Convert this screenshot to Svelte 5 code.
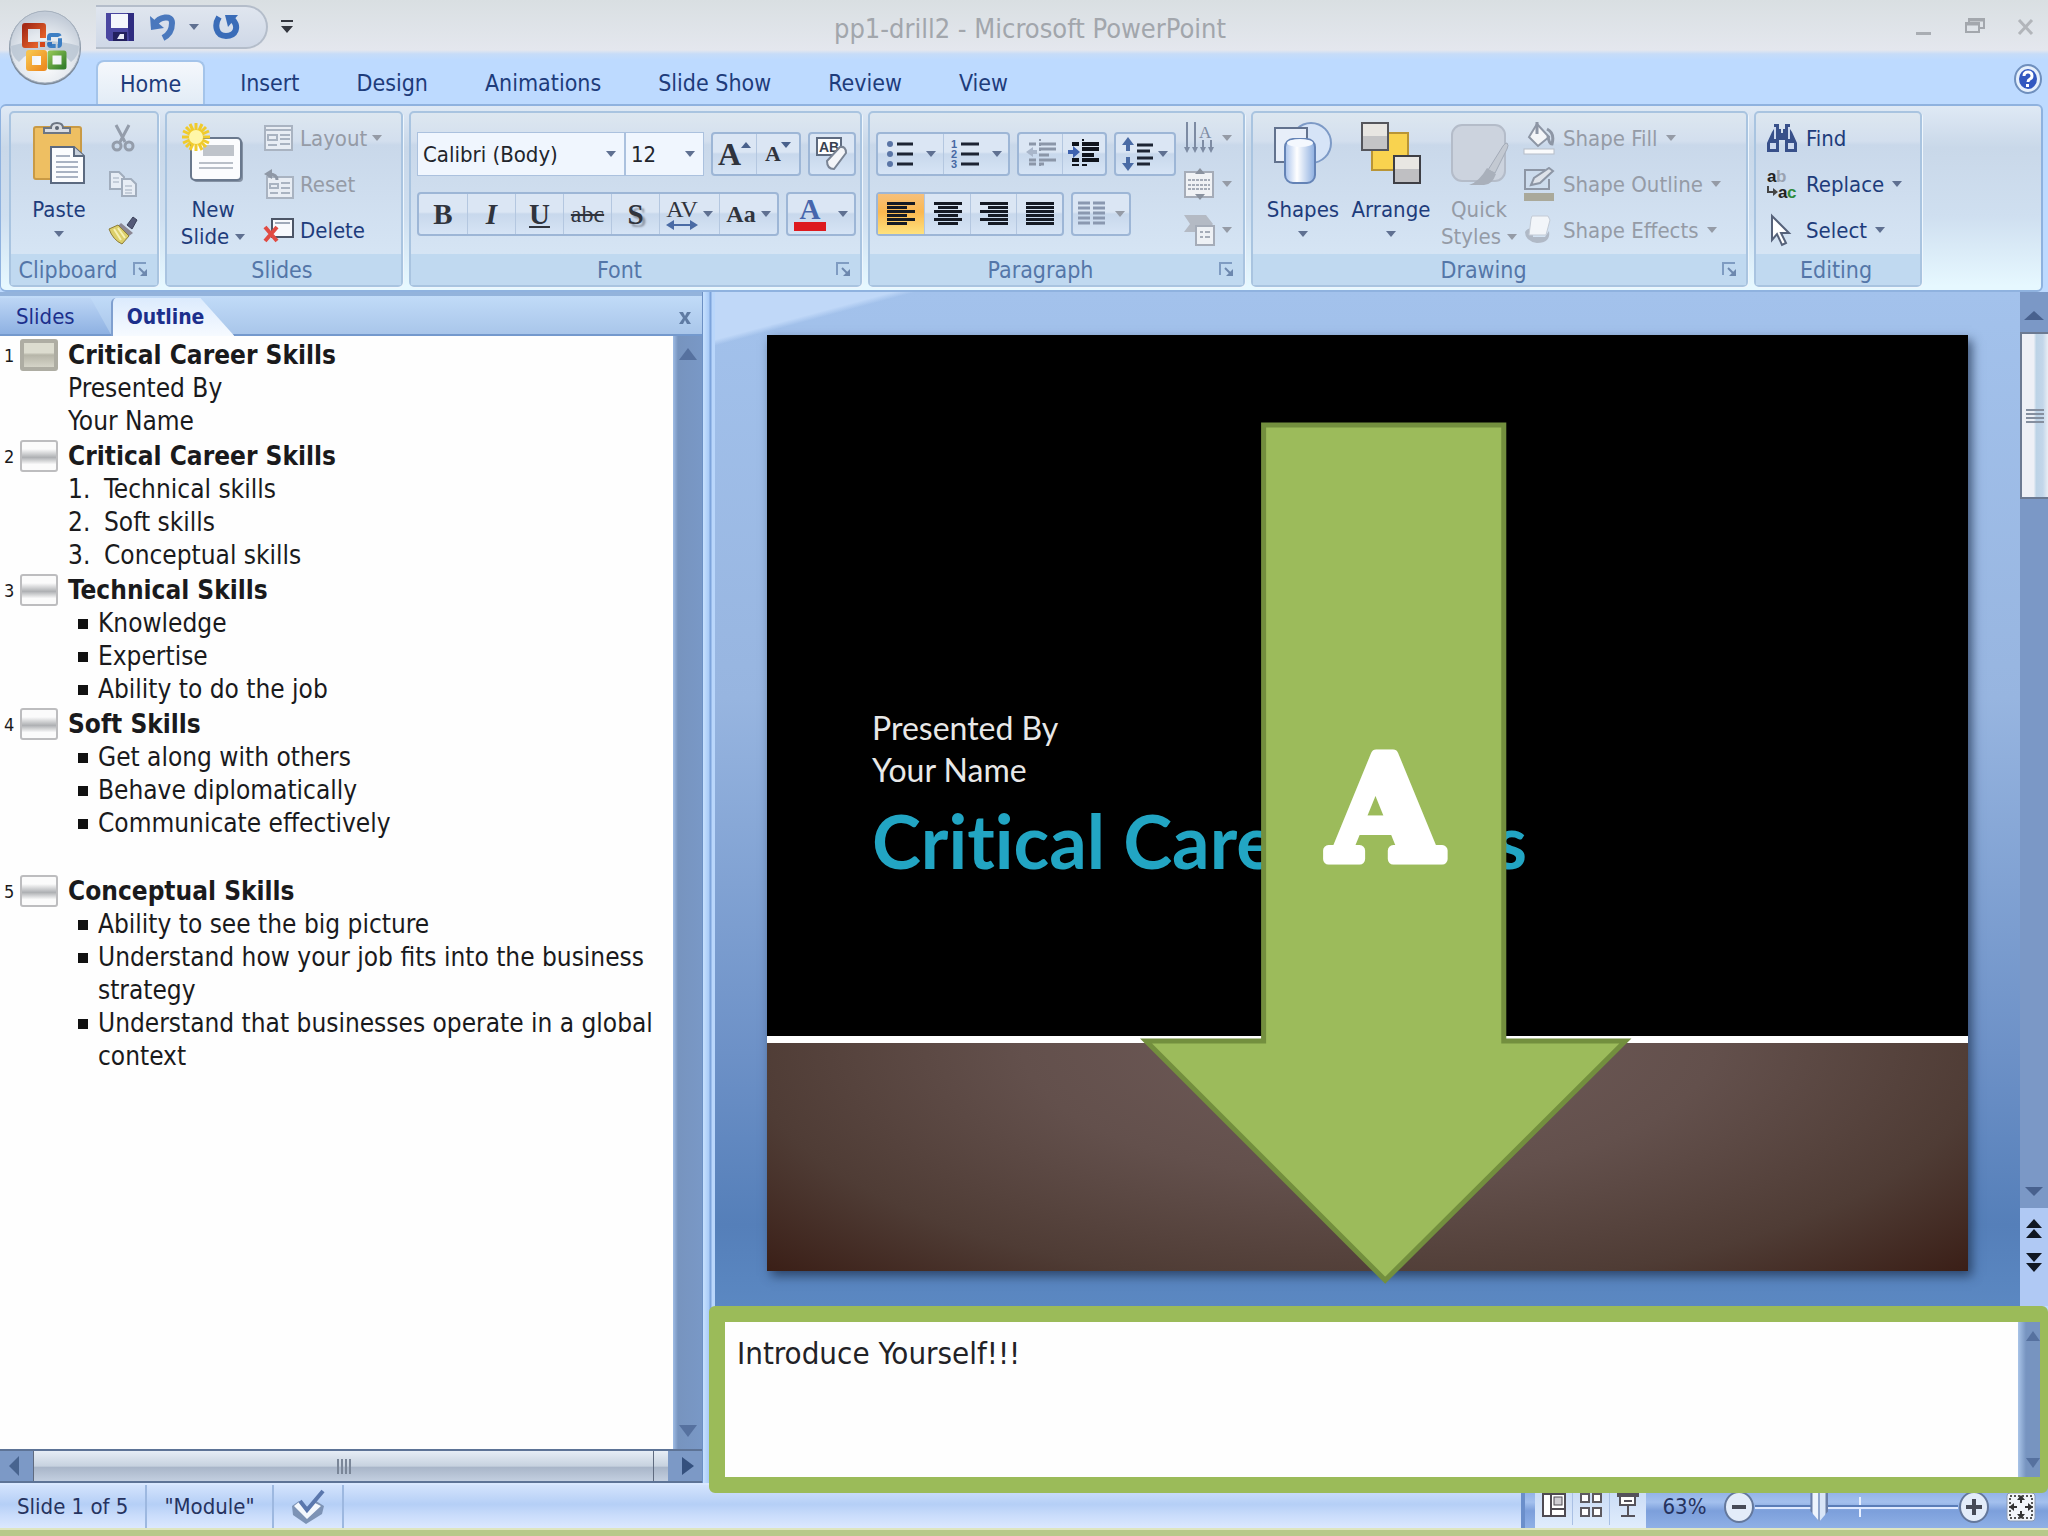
<script lang="ts">
    type OutlineItem = { title: string; kind: "plain" | "number" | "bullet"; lines: string[]; gapAfter?: boolean };

    const tabs = ["Home", "Insert", "Design", "Animations", "Slide Show", "Review", "View"];

    const outline: OutlineItem[] = [
        { title: "Critical Career Skills", kind: "plain", lines: ["Presented By", "Your Name"] },
        { title: "Critical Career Skills", kind: "number", lines: ["Technical skills", "Soft skills", "Conceptual skills"] },
        { title: "Technical Skills", kind: "bullet", lines: ["Knowledge", "Expertise", "Ability to do the job"] },
        {
            title: "Soft Skills",
            kind: "bullet",
            lines: ["Get along with others", "Behave diplomatically", "Communicate effectively"],
            gapAfter: true,
        },
        {
            title: "Conceptual Skills",
            kind: "bullet",
            lines: [
                "Ability to see the big picture",
                "Understand how your job fits into the business strategy",
                "Understand that businesses operate in a global context",
            ],
        },
    ];

    // line ends of the four alignment icons: [x1, x2] for each row
    const alignments = [
        { name: "Align left", rows: [[0, 28], [0, 20], [0, 28], [0, 20], [0, 28], [0, 20]] },
        { name: "Center", rows: [[0, 28], [4, 24], [0, 28], [4, 24], [0, 28], [4, 24]] },
        { name: "Align right", rows: [[0, 28], [8, 28], [0, 28], [8, 28], [0, 28], [8, 28]] },
        { name: "Justify", rows: [[0, 28], [0, 28], [0, 28], [0, 28], [0, 28], [0, 28]] },
    ];

    let activeTab = $state("Home");
    let activeAlign = $state("Align left");
    let selected = $state(0);
    let zoom = $state(63);
    let notes = $state("Introduce Yourself!!!");
</script>

{#snippet caret()}
    <svg class="caret" width="10" height="6" viewBox="0 0 10 6" aria-hidden="true"><path d="M0 0h10L5 6z" fill="currentColor" /></svg>
{/snippet}

{#snippet launcher(name: string)}
    <button class="launcher" aria-label="{name} options">
        <svg width="16" height="16" viewBox="0 0 16 16" fill="none">
            <path d="M1 13V1h12" stroke="#7f9cc2" stroke-width="2" />
            <path d="M6 6l6 6" stroke="#6d88ae" stroke-width="2" />
            <path d="M14 7v7H7z" fill="#6d88ae" />
        </svg>
    </button>
{/snippet}

<div class="window">
    <header class="top">
        <button class="office" aria-label="Office Button">
            <svg width="76" height="78" viewBox="0 0 76 78">
                <defs>
                    <radialGradient id="orb" cx="50%" cy="70%" r="65%">
                        <stop offset="0" stop-color="#ffffff" />
                        <stop offset="0.6" stop-color="#e3e8ee" />
                        <stop offset="1" stop-color="#c3ccd8" />
                    </radialGradient>
                    <linearGradient id="red" x2="1" y2="1">
                        <stop offset="0" stop-color="#a52a16" /><stop offset="1" stop-color="#ef6a2c" />
                    </linearGradient>
                    <linearGradient id="gold" x2="1" y2="1">
                        <stop offset="0" stop-color="#f7c24a" /><stop offset="1" stop-color="#ee8d22" />
                    </linearGradient>
                    <linearGradient id="green" x2="1" y2="1">
                        <stop offset="0" stop-color="#8cc152" /><stop offset="1" stop-color="#35802c" />
                    </linearGradient>
                </defs>
                <ellipse cx="38" cy="40" rx="36" ry="37" fill="#7d8b9c" />
                <ellipse cx="38" cy="39" rx="35" ry="36" fill="url(#orb)" stroke="#a8b3c0" stroke-width="1" />
                <path d="M4 38q17-5 34-5t34 5q0 10-8 16-10-12-26-12T12 54Q4 48 4 38z" fill="#b8c4d2" opacity=".8" />
                <g fill="none" stroke-linejoin="round">
                    <path d="M31 37H18V18h18v12" stroke="url(#red)" stroke-width="6" />
                    <rect x="42" y="27" width="11" height="11" rx="2" stroke="#3d7fc4" stroke-width="4" stroke-dasharray="9 2" />
                    <path d="M22 45h15v15H22z" stroke="url(#gold)" stroke-width="6" />
                    <path d="M43 45h14v14H43z" stroke="url(#green)" stroke-width="5" />
                </g>
                <rect x="33" y="34" width="5" height="5" fill="#d4471b" />
                <rect x="41" y="34" width="4" height="4" fill="#3674bd" />
            </svg>
        </button>

        <div class="titlebar">
            <div class="quick">
                <button aria-label="Save">
                    <svg width="30" height="30" viewBox="0 0 30 30">
                        <path d="M1 1h28v28H4l-3-3z" fill="#4a46a0" />
                        <path d="M22 1h7v28h-5z" fill="#2f2c80" />
                        <rect x="6" y="2" width="17" height="14" fill="#f4f6fc" />
                        <rect x="8" y="20" width="14" height="9" fill="#23205e" />
                        <path d="M12 27l3-5h4v5z" fill="#e8eaf6" />
                    </svg>
                </button>
                <button aria-label="Undo">
                    <svg width="28" height="28" viewBox="0 0 28 28" fill="none">
                        <path d="M1 3l1 14 13-2z" fill="#4a78bd" />
                        <path d="M6 11C10 4 23 1 23 10c0 7-3 12-9 15" stroke="#4a78bd" stroke-width="6" />
                    </svg>
                </button>
                <button class="narrow" aria-label="Undo list">{@render caret()}</button>
                <button aria-label="Repeat">
                    <svg width="28" height="28" viewBox="0 0 28 28" fill="none">
                        <path d="M6 4C1 12 3 23 13 23s13-9 7-16" stroke="#3a6cb8" stroke-width="6" />
                        <path d="M12 2h13l-10 12z" fill="#3a6cb8" />
                    </svg>
                </button>
            </div>
            <button class="customize" aria-label="Customize Quick Access Toolbar">
                <svg width="14" height="14" viewBox="0 0 14 14" fill="#34373f">
                    <path d="M1 0h12v2H1zM1 6h12l-6 7z" />
                </svg>
            </button>
            <h1>pp1-drill2 - Microsoft PowerPoint</h1>
            <div class="controls">
                <button aria-label="Minimize">
                    <svg width="20" height="20" viewBox="0 0 20 20"><path d="M2 15h15v3H2z" fill="#a9adb3" /></svg>
                </button>
                <button aria-label="Restore">
                    <svg width="22" height="20" viewBox="0 0 22 20" fill="none" stroke="#a3a7ad">
                        <path d="M5 5V2h15v9h-4" stroke-width="2" /><path d="M2 6h13v9H2z" stroke-width="2" /><path d="M2 7h13M5 3h15" stroke-width="3" />
                    </svg>
                </button>
                <button aria-label="Close">
                    <svg width="20" height="20" viewBox="0 0 20 20"><path d="M3 3l13 14M16 3L3 17" stroke="#b2b5ba" stroke-width="3" /></svg>
                </button>
            </div>
        </div>

        <nav class="tabs">
            {#each tabs as tab}
                <button class="tab" class:active={tab === activeTab} onclick={() => (activeTab = tab)}>{tab}</button>
            {/each}
            <button class="help" aria-label="Help">
                <svg width="28" height="30" viewBox="0 0 28 30">
                    <ellipse cx="14" cy="15" rx="13" ry="14" fill="#e6f0fc" stroke="#6f8fbd" stroke-width="2" />
                    <ellipse cx="14" cy="15" rx="9" ry="10" fill="#3157c0" />
                    <path d="M10 12q0-4 4-4t4 4q0 2-2 3t-2 3" fill="none" stroke="#fff" stroke-width="3" />
                    <rect x="12" y="20" width="3" height="3" fill="#fff" />
                </svg>
            </button>
        </nav>
    </header>

    <div class="ribbon">
        <section class="group clipboard">
            <div class="body">
                <button class="big">
                    <svg width="56" height="66" viewBox="0 0 56 66">
                        <rect x="3" y="6" width="47" height="52" rx="2" fill="#eebf62" stroke="#c99a45" stroke-width="2" />
                        <path d="M13 12V7h7q0-5 6-5t6 5h7v5z" fill="#d9dde3" stroke="#6d7683" stroke-width="2" />
                        <circle cx="26" cy="7" r="2" fill="#5d6673" />
                        <path d="M20 26h23l10 9v27H20z" fill="#fbfcfe" stroke="#5c6a80" stroke-width="2" />
                        <path d="M43 26v9h10" fill="#c7d0dc" stroke="#5c6a80" stroke-width="2" />
                        <path d="M25 35h14M25 41h22M25 46h22M25 51h22M25 56h22" stroke="#a9b2c2" stroke-width="2" />
                    </svg>
                    <span>Paste</span>
                    {@render caret()}
                </button>
                <div class="stack">
                    <button class="small" aria-label="Cut" disabled>
                        <svg width="28" height="30" viewBox="0 0 28 30" fill="none" stroke="#949dab">
                            <path d="M7 2l9 17M20 2l-9 17" stroke-width="3" />
                            <ellipse cx="8" cy="23" rx="4" ry="4" stroke-width="3" /><ellipse cx="20" cy="23" rx="4" ry="4" stroke-width="3" />
                        </svg>
                    </button>
                    <button class="small" aria-label="Copy" disabled>
                        <svg width="30" height="28" viewBox="0 0 30 28" fill="#e7edf5" stroke="#a1adbd" stroke-width="2">
                            <path d="M2 2h9l5 5v12H2z" /><path d="M14 9h9l5 5v12H14z" />
                            <path d="M5 8h6M5 12h6M17 16h7M17 20h7M17 23h7" stroke-width="1" />
                        </svg>
                    </button>
                    <button class="small" aria-label="Format Painter">
                        <svg width="30" height="30" viewBox="0 0 30 30">
                            <path d="M19 10l6-8 4 3-5 9z" fill="#545a78" stroke="#3a3f58" />
                            <path d="M13 8l12 10-4 3L10 11z" fill="#8b8794" />
                            <path d="M1 14l9-4 11 11-7 8q-9-4-13-15z" fill="#dccf6a" stroke="#8d7c36" />
                            <path d="M6 14l7 11M10 13l7 10" stroke="#f6f0b4" stroke-width="2" />
                        </svg>
                    </button>
                </div>
            </div>
            <footer><span>Clipboard</span>{@render launcher("Clipboard")}</footer>
        </section>

        <section class="group slides">
            <div class="body">
                <button class="big">
                    <svg width="64" height="66" viewBox="0 0 64 66">
                        <rect x="12" y="19" width="50" height="42" rx="4" fill="#8592a4" />
                        <rect x="10" y="17" width="50" height="42" rx="4" fill="#fbfcfe" stroke="#69788d" stroke-width="2" />
                        <rect x="22" y="24" width="31" height="11" fill="#bfc4cb" />
                        <path d="M18 42h34M18 47h34" stroke="#b9bfc8" stroke-width="2" />
                        <path d="M15 2v28M1 16h28M5 6l20 20M25 6L5 26M9 3l12 26M21 3L9 29M2 10l26 12M28 10L2 22" stroke="#f0cb2c" stroke-width="3" />
                        <circle cx="15" cy="16" r="7" fill="#fff6a8" />
                    </svg>
                    <span>New</span>
                    <span class="with-caret">Slide {@render caret()}</span>
                </button>
                <div class="stack">
                    <button class="small" disabled>
                        <svg width="32" height="28" viewBox="0 0 32 28" fill="none" stroke="#a9b3c1" stroke-width="2">
                            <rect x="2" y="2" width="27" height="24" fill="#e8edf4" /><path d="M2 6h27M5 11h9v5H5zM17 11h10M17 15h10M5 21h9M17 20h10" />
                        </svg>
                        Layout {@render caret()}
                    </button>
                    <button class="small" disabled>
                        <svg width="32" height="32" viewBox="0 0 32 32" fill="none" stroke="#a9b3c1" stroke-width="2">
                            <rect x="4" y="9" width="26" height="21" fill="#e8edf4" /><path d="M7 16h8v4H7zM18 15h9M18 20h9M7 25h8M18 25h9" />
                            <path d="M14 12q0-6-8-6" stroke="#8f98a6" stroke-width="3" /><path d="M9 1v10L1 6z" fill="#8f98a6" stroke="none" />
                        </svg>
                        Reset
                    </button>
                    <button class="small">
                        <svg width="32" height="28" viewBox="0 0 32 28">
                            <rect x="9" y="3" width="21" height="18" fill="#f7f9fd" stroke="#4c5566" stroke-width="2" /><path d="M12 7h15" stroke="#9fa9b9" stroke-width="2" />
                            <path d="M2 11l12 14M14 11L2 25" stroke="#e04b43" stroke-width="4" />
                        </svg>
                        Delete
                    </button>
                </div>
            </div>
            <footer><span>Slides</span></footer>
        </section>

        <section class="group font">
            <div class="body">
                <div class="rows">
                    <div class="row">
                        <div class="combos">
                            <label class="combo family">
                                <select aria-label="Font"><option>Calibri (Body)</option></select>
                                {@render caret()}
                            </label>
                            <label class="combo size">
                                <select aria-label="Font size"><option>12</option></select>
                                {@render caret()}
                            </label>
                        </div>
                        <div class="bar">
                            <button class="glyph grow" aria-label="Grow Font">A<svg width="10" height="6" viewBox="0 0 10 6"><path d="M0 6h10L5 0z" fill="#49618c" /></svg></button>
                            <button class="glyph shrink" aria-label="Shrink Font">A<svg width="10" height="6" viewBox="0 0 10 6"><path d="M0 0h10L5 6z" fill="#49618c" /></svg></button>
                        </div>
                        <div class="bar">
                            <button class="clear" aria-label="Clear Formatting">
                                <svg width="34" height="36" viewBox="0 0 34 36">
                                    <rect x="2" y="2" width="24" height="17" fill="#fff" stroke="#5e6b80" stroke-width="2" />
                                    <text x="4" y="16" font-family="Liberation Sans, sans-serif" font-weight="700" font-size="14" fill="#3a4250">AB</text>
                                    <path d="M12 25L25 11q6-1 6 6L19 33q-7 0-7-8z" fill="#f4f5f8" stroke="#7a8494" stroke-width="2" />
                                </svg>
                            </button>
                        </div>
                    </div>
                    <div class="row">
                        <div class="bar styles">
                            <button class="glyph"><b>B</b></button>
                            <button class="glyph"><i>I</i></button>
                            <button class="glyph"><u>U</u></button>
                            <button class="glyph strike"><s>abc</s></button>
                            <button class="glyph shadow">S</button>
                            <button class="glyph spacing" aria-label="Character Spacing">
                                <span>AV<svg width="32" height="10" viewBox="0 0 32 10"><path d="M0 5l8-5v4h16V0l8 5-8 5V6H8v4z" fill="#4a6ba5" /></svg></span>
                                {@render caret()}
                            </button>
                            <button class="glyph case">Aa {@render caret()}</button>
                        </div>
                        <div class="bar">
                            <button class="glyph color" aria-label="Font Color"><span>A</span>{@render caret()}</button>
                        </div>
                    </div>
                </div>
            </div>
            <footer><span>Font</span>{@render launcher("Font")}</footer>
        </section>

        <section class="group paragraph">
            <div class="body">
                <div class="rows">
                    <div class="row">
                        <div class="bar lists">
                            <button aria-label="Bullets">
                                <svg width="28" height="28" viewBox="0 0 28 28">
                                    <g fill="#5a75a6"><circle cx="4" cy="4" r="3" /><circle cx="4" cy="14" r="3" /><circle cx="4" cy="24" r="3" /></g>
                                    <path d="M11 4h16M11 14h16M11 24h16" stroke="#1d2433" stroke-width="3" />
                                </svg>
                                {@render caret()}
                            </button>
                            <button aria-label="Numbering">
                                <svg width="30" height="30" viewBox="0 0 30 30">
                                    <g font-family="Liberation Sans, sans-serif" font-weight="700" font-size="11" fill="#4768a3">
                                        <text x="1" y="9">1</text><text x="1" y="19">2</text><text x="1" y="29">3</text>
                                    </g>
                                    <path d="M11 5h18M11 15h18M11 25h18" stroke="#1d2433" stroke-width="3" />
                                </svg>
                                {@render caret()}
                            </button>
                        </div>
                        <div class="bar indents">
                            <button aria-label="Decrease List Level" disabled>
                                <svg width="32" height="32" viewBox="0 0 32 32" stroke="#8b96a8" stroke-width="3">
                                    <path d="M4 6h7M14 6h17M14 11h17M14 17h10M14 22h17M4 22h7M4 26h7M14 26h5" /><path d="M15 1v30" stroke-width="2" stroke-dasharray="2 3" />
                                    <path d="M1 14l7-5v3h4v4H8v3z" fill="#a9b6ca" stroke="none" />
                                </svg>
                            </button>
                            <button aria-label="Increase List Level">
                                <svg width="32" height="32" viewBox="0 0 32 32" stroke="#10141c" stroke-width="4">
                                    <path d="M4 6h7M14 6h17M14 11h17M14 17h12M14 22h17M4 22h7" /><path d="M4 27h7M14 27h5" stroke-width="2" /><path d="M15 1v30" stroke-width="2" stroke-dasharray="2 3" />
                                    <path d="M12 14L5 8v4H0v4h5v4z" fill="#3e62b0" stroke="none" />
                                </svg>
                            </button>
                        </div>
                        <div class="bar">
                            <button class="line-spacing" aria-label="Line Spacing">
                                <svg width="32" height="34" viewBox="0 0 32 34">
                                    <path d="M6 0l6 8H8v6H4V8H0zM6 34l6-8H8v-6H4v6H0z" fill="#4a6ba5" />
                                    <path d="M15 8h16M15 14h13M15 21h16M15 27h13" stroke="#1d2433" stroke-width="3" />
                                </svg>
                                {@render caret()}
                            </button>
                        </div>
                    </div>
                    <div class="row">
                        <div class="bar aligns">
                            {#each alignments as align}
                                <button class:on={align.name === activeAlign} aria-label={align.name} onclick={() => (activeAlign = align.name)}>
                                    <svg width="28" height="26" viewBox="0 0 28 26">
                                        {#each align.rows as [x1, x2], i}
                                            <rect x={x1} y={1 + i * 4} width={x2 - x1} height="3" fill="#151a24" />
                                        {/each}
                                    </svg>
                                </button>
                            {/each}
                        </div>
                        <div class="bar">
                            <button class="columns" aria-label="Columns" disabled>
                                <svg width="28" height="26" viewBox="0 0 28 26">
                                    <path d="M0 2h12M0 7h12M0 12h12M0 17h12M0 22h12M15 2h12M15 7h12M15 12h12M15 17h12M15 22h12" stroke="#8a98b0" stroke-width="3" />
                                </svg>
                                {@render caret()}
                            </button>
                        </div>
                    </div>
                </div>
                <div class="stack">
                    <button class="small" aria-label="Text Direction" disabled>
                        <svg width="32" height="34" viewBox="0 0 32 34" fill="none" stroke="#7d8ba3" stroke-width="2">
                            <path d="M3 1v26M11 1v26M19 19v9M27 19v9" /><path d="M0 26h6l-3 6zM8 26h6l-3 6zM16 26h6l-3 6zM24 26h6l-3 6z" fill="#7d8ba3" stroke="none" />
                            <text x="15" y="17" font-family="Liberation Serif, serif" font-size="17" fill="#7d8ba3" stroke="none">A</text>
                        </svg>
                        {@render caret()}
                    </button>
                    <button class="small" aria-label="Align Text" disabled>
                        <svg width="32" height="32" viewBox="0 0 32 32">
                            <rect x="1" y="4" width="28" height="25" fill="#f0f2f5" stroke="#a5acb8" stroke-width="2" />
                            <path d="M4 12h22M4 17h22M4 21h22" stroke="#a5acb8" stroke-width="2" stroke-dasharray="3 1" />
                            <path d="M16 0l5 6H11zM16 32l5-6H11z" fill="#8a929f" />
                        </svg>
                        {@render caret()}
                    </button>
                    <button class="small" aria-label="Convert to SmartArt" disabled>
                        <svg width="32" height="34" viewBox="0 0 32 34">
                            <path d="M0 2h22l7 9-7 8H0l6-8z" fill="#b4bac4" />
                            <rect x="12" y="13" width="18" height="19" fill="#eef1f5" stroke="#a5acb8" stroke-width="2" /><path d="M16 19h3M21 19h5M16 24h3M21 24h5" stroke="#a5acb8" stroke-width="2" />
                        </svg>
                        {@render caret()}
                    </button>
                </div>
            </div>
            <footer><span>Paragraph</span>{@render launcher("Paragraph")}</footer>
        </section>

        <section class="group drawing">
            <div class="body">
                <button class="big">
                    <svg width="60" height="66" viewBox="0 0 60 66">
                        <defs>
                            <linearGradient id="tube"><stop offset="0" stop-color="#a9c3ec" /><stop offset=".4" stop-color="#fff" /><stop offset="1" stop-color="#8caee0" /></linearGradient>
                        </defs>
                        <ellipse cx="38" cy="22" rx="20" ry="20" fill="#d6e4f7" stroke="#7d9ac6" stroke-width="2" />
                        <rect x="2" y="7" width="32" height="34" fill="#e7eef9" stroke="#62728e" stroke-width="2" />
                        <rect x="12" y="18" width="30" height="44" rx="8" fill="url(#tube)" stroke="#6483b6" stroke-width="2" />
                        <ellipse cx="27" cy="22" rx="13" ry="4" fill="#f4f8fe" />
                    </svg>
                    <span>Shapes</span>
                    {@render caret()}
                </button>
                <button class="big">
                    <svg width="60" height="66" viewBox="0 0 60 66" stroke-width="2">
                        <rect x="11" y="12" width="36" height="37" fill="#f9d34f" stroke="#b99536" />
                        <rect x="1" y="2" width="26" height="27" fill="#c4c4c6" stroke="#55565c" /><path d="M2 3h24v12H2z" fill="#e8e6e2" stroke="none" />
                        <rect x="33" y="35" width="26" height="27" fill="#bfbfc2" stroke="#3e3f45" /><path d="M34 36h24v12H34z" fill="#e8e6e2" stroke="none" />
                    </svg>
                    <span>Arrange</span>
                    {@render caret()}
                </button>
                <button class="big" disabled>
                    <svg width="60" height="66" viewBox="0 0 60 66">
                        <rect x="3" y="4" width="53" height="56" rx="10" fill="#ccd3de" stroke="#b4bcc9" stroke-width="2" />
                        <path d="M58 22q2 2 0 6L46 52l-7-3 15-24q2-3 4-3z" fill="#c3c9d2" stroke="#a3abb8" />
                        <path d="M38 47l9 6q-4 11-12 11H20q10-3 18-17z" fill="#a9b0bb" />
                    </svg>
                    <span>Quick</span>
                    <span class="with-caret">Styles {@render caret()}</span>
                </button>
                <div class="stack">
                    <button class="small" disabled>
                        <svg width="32" height="34" viewBox="0 0 32 34">
                            <path d="M14 3l12 13-11 9L6 16z" fill="#f3f5f8" stroke="#8d96a5" stroke-width="2" /><path d="M14 1v12M24 8q8 4 5 15-3 0-4-8" fill="none" stroke="#8d96a5" stroke-width="3" />
                            <rect x="1" y="28" width="30" height="5" fill="#fafbfc" stroke="#b6bdc8" />
                        </svg>
                        Shape Fill {@render caret()}
                    </button>
                    <button class="small" disabled>
                        <svg width="32" height="34" viewBox="0 0 32 34">
                            <path d="M22 3H2v19h24V12" fill="none" stroke="#8d96a5" stroke-width="2" /><path d="M8 18l3-7L26 1l4 3-13 12z" fill="#dfe3ea" stroke="#8d96a5" stroke-width="2" />
                            <rect x="1" y="26" width="30" height="8" fill="#aaa99a" />
                        </svg>
                        Shape Outline {@render caret()}
                    </button>
                    <button class="small" disabled>
                        <svg width="32" height="34" viewBox="0 0 32 34">
                            <path d="M2 19q2-4 8-4v9h12l4-6q2 12-12 12Q2 28 2 19z" fill="#b0b9c6" /><path d="M9 3h16l2 4-4 15H6L8 6z" fill="#f2f5f9" stroke="#c3cbd6" />
                        </svg>
                        Shape Effects {@render caret()}
                    </button>
                </div>
            </div>
            <footer><span>Drawing</span>{@render launcher("Drawing")}</footer>
        </section>

        <section class="group editing">
            <div class="body">
                <div class="stack">
                    <button class="small">
                        <svg width="32" height="30" viewBox="0 0 32 30" fill="#38508a">
                            <path d="M8 1h5v5h2v4h2V6h2V1h5v5l2 3 5 11v9H19V17h-6v12H1v-9L6 9l2-3z" /><path d="M4 20h6v6H4zM22 20h6v6h-6z" fill="#cdd9ef" /><path d="M9 4v12M23 4v12" stroke="#cdd9ef" stroke-width="2" />
                        </svg>
                        Find
                    </button>
                    <button class="small">
                        <svg width="32" height="34" viewBox="0 0 32 34" font-family="Liberation Sans, sans-serif" font-weight="700" font-size="17">
                            <text x="1" y="15" fill="#222">a</text><text x="10" y="15" fill="#9aa3b2">b</text>
                            <text x="12" y="31" fill="#222">a</text><text x="21" y="31" fill="#2f8a3c">c</text>
                            <path d="M2 19v6h8" fill="none" stroke="#444" stroke-width="2" /><path d="M7 21l5 4-5 4z" fill="#444" />
                        </svg>
                        Replace {@render caret()}
                    </button>
                    <button class="small">
                        <svg width="32" height="34" viewBox="0 0 32 34"><path d="M6 3l17 17h-8l5 10-4 2-5-11-5 6z" fill="#fff" stroke="#56627a" stroke-width="2" /></svg>
                        Select {@render caret()}
                    </button>
                </div>
            </div>
            <footer><span>Editing</span></footer>
        </section>
    </div>

    <main class="workspace">
        <aside class="panel">
            <div class="panel-tabs">
                <button class="ptab">Slides</button>
                <button class="ptab current">Outline</button>
                <button class="panel-close" aria-label="Close pane">
                    <svg width="14" height="14" viewBox="0 0 14 14"><path d="M1 1h4l2 4 2-4h4L9 7l4 6H9L7 9l-2 4H1l4-6z" fill="#5f7ba3" /></svg>
                </button>
            </div>
            <div class="panel-body">
                <ol class="outline">
                    {#each outline as item, i}
                        <li class:gap={item.gapAfter}>
                            <span class="num">{i + 1}</span>
                            <button class="thumb" class:chosen={selected === i} aria-label="Slide {i + 1}" onclick={() => (selected = i)}></button>
                            <div class="entry">
                                <h2>{item.title}</h2>
                                <ul>
                                    {#each item.lines as line, n}
                                        <li>
                                            {#if item.kind === "number"}<span class="mark">{n + 1}.</span>{/if}
                                            {#if item.kind === "bullet"}<span class="square"></span>{/if}
                                            <span>{line}</span>
                                        </li>
                                    {/each}
                                </ul>
                            </div>
                        </li>
                    {/each}
                </ol>
                <div class="vscroll">
                    <svg width="18" height="12" viewBox="0 0 18 12"><path d="M0 12L9 0l9 12z" fill="#56719f" /></svg>
                    <svg width="18" height="12" viewBox="0 0 18 12"><path d="M0 0h18L9 12z" fill="#56719f" /></svg>
                </div>
            </div>
            <div class="hscroll">
                <svg width="10" height="20" viewBox="0 0 10 20"><path d="M10 0v20L0 10z" fill="#48648f" /></svg>
                <div class="hthumb"><i></i><i></i><i></i><i></i></div>
                <div class="hend"></div>
                <svg width="12" height="18" viewBox="0 0 12 18"><path d="M0 0v18L12 9z" fill="#34507e" /></svg>
            </div>
        </aside>
        <div class="splitter"></div>

        <div class="editor">
            <div class="view">
                <div class="stage">
                    <div class="slide">
                        <div class="upper">
                            <p>Presented By</p>
                            <p>Your Name</p>
                            <h2>Critical Career Skills</h2>
                        </div>
                        <div class="lower"></div>
                        <svg class="arrow" viewBox="0 0 490 862">
                            <path d="M124 6h239v613h121L245 857 7 619h117z" fill="#9cbb5b" stroke="#738f3e" stroke-width="5" />
                            <text x="245" y="438" text-anchor="middle">A</text>
                        </svg>
                    </div>
                </div>
                <div class="slide-scroll">
                    <button aria-label="Scroll up"><svg width="20" height="9" viewBox="0 0 20 9"><path d="M0 9L10 0l10 9z" fill="#48618e" /></svg></button>
                    <div class="sthumb"><i></i><i></i><i></i><i></i></div>
                    <div class="track"></div>
                    <button aria-label="Scroll down"><svg width="18" height="9" viewBox="0 0 18 9"><path d="M0 0h18L9 9z" fill="#48618e" /></svg></button>
                    <div class="steps">
                        <button aria-label="Previous Slide"><svg width="16" height="20" viewBox="0 0 16 20"><path d="M0 9l8-9 8 9zM0 19l8-9 8 9z" fill="#111722" /></svg></button>
                        <button aria-label="Next Slide"><svg width="16" height="20" viewBox="0 0 16 20"><path d="M0 1l8 9 8-9zM0 11l8 9 8-9z" fill="#111722" /></svg></button>
                    </div>
                </div>
            </div>
            <div class="notes">
                <textarea aria-label="Notes" bind:value={notes}></textarea>
                <div class="nscroll">
                    <svg width="14" height="10" viewBox="0 0 14 10"><path d="M0 10L7 0l7 10z" fill="#56719f" /></svg>
                    <svg width="14" height="10" viewBox="0 0 14 10"><path d="M0 0h14L7 10z" fill="#56719f" /></svg>
                </div>
            </div>
        </div>
    </main>

    <footer class="status">
        <span class="cell">Slide 1 of 5</span>
        <span class="cell">"Module"</span>
        <button class="cell" aria-label="Spelling">
            <svg width="34" height="36" viewBox="0 0 34 36">
                <path d="M1 17l7-5 8 6 9-6 8 5-2 8-16 10-13-9z" fill="#7d93b5" /><path d="M3 17l5-4 8 6 8-5 6 3-14 13z" fill="#f4f8fd" />
                <path d="M9 12l7 9L32 2" fill="none" stroke="#5a77ad" stroke-width="4" />
            </svg>
        </button>
        <div class="right">
            <div class="views">
                <button aria-label="Normal">
                    <svg width="26" height="26" viewBox="0 0 26 26" fill="#fff" stroke="#4f4b52" stroke-width="2"><path d="M2 2h22v22H2zM10 2v22M10 17h14" /><rect x="13" y="5" width="8" height="8" fill="#cfcdd2" stroke-width="1" /></svg>
                </button>
                <button aria-label="Slide Sorter">
                    <svg width="26" height="26" viewBox="0 0 26 26" fill="#fff" stroke="#5d5a60" stroke-width="2"><path d="M3 2h8v8H3zM15 2h8v8h-8zM3 16h8v8H3zM15 16h8v8h-8z" /></svg>
                </button>
                <button aria-label="Slide Show">
                    <svg width="26" height="26" viewBox="0 0 26 26" fill="#fff" stroke="#55525a" stroke-width="2"><path d="M5 4h15v9H5z" /><path d="M2 3h22" stroke-width="4" /><path d="M9 9h8M13 14v9M6 24h14" /></svg>
                </button>
            </div>
            <span class="percent">{zoom}%</span>
            <button class="round" aria-label="Zoom out" onclick={() => (zoom -= 10)}>
                <svg width="32" height="34" viewBox="0 0 32 34"><ellipse cx="16" cy="17" rx="14" ry="15" fill="#e3ecf9" stroke="#64789c" stroke-width="2" /><path d="M9 17h14" stroke="#474b57" stroke-width="4" /></svg>
            </button>
            <input type="range" min="10" max="187" bind:value={zoom} aria-label="Zoom" />
            <button class="round" aria-label="Zoom in" onclick={() => (zoom += 10)}>
                <svg width="32" height="34" viewBox="0 0 32 34"><ellipse cx="16" cy="17" rx="14" ry="15" fill="#e3ecf9" stroke="#64789c" stroke-width="2" /><path d="M8 17h16M16 9v16" stroke="#474b57" stroke-width="4" /></svg>
            </button>
            <button class="fit" aria-label="Fit slide to current window">
                <svg width="30" height="30" viewBox="0 0 30 30">
                    <rect x="1" y="1" width="28" height="28" rx="3" fill="#f2f5fa" stroke="#8a9ab5" /><rect x="4" y="4" width="22" height="22" fill="none" stroke="#555" stroke-width="2" stroke-dasharray="2 2" />
                    <path d="M15 6v5M15 19v5M6 15h5M19 15h5" stroke="#333" stroke-width="2" />
                    <path d="M11 8h8l-4-5zM11 22h8l-4 5zM8 11v8l-5-4zM22 11v8l5-4z" fill="#333" />
                </svg>
            </button>
        </div>
    </footer>
    <div class="edge"></div>
</div>

<style>
    :global(body) {
        margin: 0;
    }

    .window {
        min-height: 100vh;
        display: flex;
        flex-direction: column;
        overflow: hidden;

        font-family: "DejaVu Sans Condensed", "Open Sans", sans-serif;
        font-size: 22px;
        color: #1e3c7b;
        background: #bddaff;
    }

    .window * {
        box-sizing: border-box;
    }

    button {
        display: flex;
        align-items: center;
        justify-content: center;
        padding: 0;
        border: 0;
        background: none;
        font: inherit;
        color: inherit;
    }

    svg {
        display: block;
        flex: none;
    }

    .caret {
        color: #5f7091;
    }

    button:disabled,
    button:disabled .caret {
        color: #959ba6;
    }

    h1,
    h2,
    p,
    ol,
    ul {
        margin: 0;
        padding: 0;
        list-style: none;
    }

    /* title bar and tabs */
    .top {
        display: grid;
        grid-template-columns: 96px 1fr;
        grid-template-rows: 54px 50px;
        background: linear-gradient(#d9dfe2, #e4e7ee 50px, #c6dcf8 54px, #bddaff 60px);
    }

    .office {
        grid-row: 1 / 3;
        align-items: flex-start;
        justify-content: flex-start;
        padding: 8px 0 0 7px;
    }

    .titlebar {
        display: flex;
        align-items: center;
    }

    .quick {
        display: flex;
        align-items: center;
        gap: 14px;
        width: 172px;
        height: 44px;
        padding-left: 9px;
        border: 2px solid #b4bdca;
        border-left: 0;
        border-radius: 0 22px 22px 0;
        background: linear-gradient(#e0e6ef, #cfd8e7);
    }

    .quick .narrow {
        margin-left: -2px;
    }

    .customize {
        margin-left: 12px;
    }

    h1 {
        flex: 1;
        padding: 4px 148px 0 0;
        text-align: center;
        font-size: 27px;
        line-height: 32px;
        font-weight: 400;
        color: #a2a6ac;
    }

    .controls {
        display: flex;
        gap: 30px;
        padding-right: 12px;
    }

    .tabs {
        display: flex;
        gap: 13px;
        padding-right: 6px;
        font-size: 23px;
    }

    .tab {
        height: 50px;
        padding: 8px 22px 0;
    }

    .tab.active {
        margin-top: 6px;
        height: 44px;
        padding-top: 2px;
        border: 2px solid #a4c4ea;
        border-bottom: 0;
        border-radius: 8px 8px 0 0;
        background: linear-gradient(#f5f8fc, #e2ecf6);
    }

    .help {
        margin-left: auto;
    }

    /* ribbon */
    .ribbon {
        display: flex;
        gap: 6px;
        height: 188px;
        margin-right: 5px;
        padding: 5px 0 0 8px;
        border: 2px solid #8fb2df;
        border-width: 2px 2px 2px 1px;
        border-radius: 6px;
        background: linear-gradient(#dfe9f5, #c9d8e9 42px, #cfdff0 110px, #e6f8ff 180px);
    }

    .group {
        display: flex;
        flex-direction: column;
        height: 176px;
        border: 2px solid #a9c4e0;
        border-radius: 5px;
        background: linear-gradient(#dde7f0, #d3dfee 28px, #c9d8ea 32px, #d9e8f7);
        box-shadow: 1px 1px 0 #eef6fd;
    }

    .clipboard {
        width: 150px;
    }

    .slides {
        width: 238px;
    }

    .font {
        width: 453px;
    }

    .paragraph {
        width: 377px;
    }

    .drawing {
        width: 497px;
    }

    .editing {
        width: 168px;
    }

    .body {
        display: flex;
        flex: 1;
        padding: 2px 6px 0;
    }

    .group footer {
        display: flex;
        align-items: center;
        height: 31px;
        padding: 0 8px 0 4px;
        background: #c0d9f0;
        color: #5476a8;
        font-size: 23px;
    }

    .group footer span {
        flex: 1;
        text-align: center;
    }

    .launcher {
        width: 16px;
        margin-left: 12px;
    }

    .big {
        flex-direction: column;
        justify-content: flex-start;
        width: 88px;
        padding-top: 6px;
        line-height: 27px;
    }

    .big span {
        margin-top: 9px;
    }

    .big > .caret {
        margin-top: 8px;
    }

    .big .with-caret {
        display: flex;
        align-items: center;
        gap: 6px;
        margin-top: 0;
    }

    .stack {
        display: flex;
        flex-direction: column;
    }

    .small {
        flex: none;
        justify-content: flex-start;
        gap: 8px;
        height: 46px;
        white-space: nowrap;
    }

    .clipboard .small {
        justify-content: center;
        width: 44px;
    }

    .clipboard .big {
        width: 84px;
    }

    .slides .big {
        width: 80px;
    }

    .slides .small {
        gap: 5px;
    }

    .slides .stack {
        margin-left: 10px;
    }

    .editing .body {
        padding-left: 10px;
    }

    .rows {
        display: flex;
        flex-direction: column;
        gap: 16px;
        padding-top: 17px;
    }

    .row {
        display: flex;
        gap: 7px;
    }

    .bar {
        display: flex;
        height: 44px;
        border: 2px solid #9db6d6;
        border-radius: 4px;
        background: linear-gradient(#dbe6f4 45%, #c8d8ec 50%, #d6e4f5);
    }

    .bar button + button {
        border-left: 1px solid #b4c7e0;
    }

    .combos {
        display: flex;
    }

    .combo {
        position: relative;
        display: block;
        height: 44px;
    }

    .combo.family {
        width: 208px;
    }

    .combo.size {
        width: 79px;
    }

    .combo select {
        appearance: none;
        width: 100%;
        height: 44px;
        padding: 0 5px;
        border: 1px solid #abc1de;
        border-radius: 0;
        background: #f0f6fe;
        font: inherit;
        color: #22252c;
    }

    .combo .caret {
        position: absolute;
        right: 9px;
        top: 19px;
    }

    .glyph {
        width: 48px;
        font-family: "Liberation Serif", serif;
        font-weight: 700;
        font-size: 29px;
        color: #30343d;
    }

    .glyph i {
        font-weight: 700;
    }

    .grow,
    .shrink {
        width: 43px;
        font-size: 32px;
    }

    .grow svg,
    .shrink svg {
        margin-bottom: 18px;
    }

    .shrink {
        font-size: 22px;
    }

    .clear {
        width: 44px;
    }

    .strike {
        font-size: 24px;
        font-weight: 400;
    }

    .shadow {
        text-shadow: 3px 3px 2px #8e97a6;
    }

    .spacing,
    .case {
        gap: 5px;
        width: 60px;
        font-size: 24px;
        font-weight: 400;
    }

    .spacing span {
        display: flex;
        flex-direction: column;
        align-items: center;
        line-height: 22px;
    }

    .case {
        font-weight: 700;
        width: 58px;
    }

    .color {
        gap: 12px;
        width: 66px;
        color: #4766ac;
    }

    .color span {
        width: 32px;
        height: 34px;
        border-bottom: 9px solid #dd1a1f;
        line-height: 25px;
        text-align: center;
    }

    .lists button {
        gap: 12px;
        width: 65px;
    }

    .indents button {
        width: 43px;
    }

    .line-spacing {
        gap: 4px;
        width: 58px;
    }

    .aligns button {
        width: 46px;
    }

    .aligns .on {
        background: linear-gradient(#f6c07b, #fbb850 45%, #ffe27d);
    }

    .columns {
        gap: 9px;
        width: 56px;
    }

    .paragraph .stack {
        margin-left: 8px;
    }

    .paragraph .small {
        gap: 6px;
    }

    /* outline pane */
    .workspace {
        display: flex;
        flex: 1;
    }

    .panel {
        display: flex;
        flex-direction: column;
        width: 703px;
        border-right: 1px solid #6c90c4;
    }

    .panel-tabs {
        display: flex;
        align-items: flex-end;
        height: 44px;
        padding-right: 10px;
        border-top: 4px solid #93b3dc;
        border-bottom: 2px solid #7499cd;
        background: linear-gradient(#c1dbf8, #a9c6ea);
    }

    .ptab {
        height: 36px;
        padding: 0 36px 0 16px;
        clip-path: polygon(0 0, calc(100% - 20px) 0, 100% 100%, 0 100%);
        background: linear-gradient(#bdd6f5, #8eb1e2);
        color: #1c2f8c;
        font-size: 22px;
    }

    .ptab.current {
        height: 38px;
        padding: 0 30px 0 14px;
        clip-path: polygon(0 0, calc(100% - 34px) 0, 100% 100%, 0 100%);
        margin-bottom: -2px;
        border-left: 2px solid #7f9fcf;
        border-radius: 5px 0 0 0;
        background: linear-gradient(#dcebfd, #f6faff);
        font-size: 21px;
        font-weight: 700;
    }

    .panel-close {
        margin: 0 0 9px auto;
    }

    .panel-body {
        display: flex;
        flex: 1;
        background: #fefefe;
    }

    .outline {
        flex: 1;
        padding-top: 3px;
        font-size: 26px;
        line-height: 33px;
        color: #1a1a1c;
    }

    .outline > li {
        display: flex;
        padding-right: 10px;
        margin-bottom: 2px;
    }

    .outline > li.gap {
        margin-bottom: 35px;
    }

    .num {
        flex: none;
        width: 20px;
        padding-left: 4px;
        font-size: 18px;
    }

    .thumb {
        flex: none;
        width: 38px;
        height: 32px;
        border: 2px solid #bdbdbf;
        border-radius: 3px;
        background: linear-gradient(#fbfbfb 25%, #aeb0b3 55%, #fbfbfb 80%);
    }

    .thumb.chosen {
        border: 4px solid #aeada3;
        background: linear-gradient(#dcdccf 40%, #b6b5a8 50%, #d5d4c8);
    }

    .entry {
        padding-left: 10px;
    }

    .entry h2 {
        font-size: 26px;
        line-height: 33px;
    }

    .entry li {
        display: flex;
    }

    .mark {
        width: 36px;
    }

    .square {
        flex: none;
        width: 10px;
        height: 10px;
        margin: 12px 10px 0;
        background: #111;
    }

    .vscroll {
        display: flex;
        flex-direction: column;
        align-items: center;
        justify-content: space-between;
        width: 29px;
        padding: 12px 0;
        background: linear-gradient(90deg, #9fbce4, #7794bf 5px, #7998c6);
    }

    .hscroll {
        display: flex;
        align-items: center;
        height: 34px;
        padding: 0 8px 0 9px;
        border: solid #5d7396;
        border-width: 2px 0;
        background: #7c99c6;
    }

    .hthumb,
    .hend {
        align-self: stretch;
        border-left: 1px solid #5f6b80;
        background: linear-gradient(#e6edf6, #c7d2df 50%, #a9b6c9 55%, #c3cfe0);
    }

    .hthumb {
        display: flex;
        flex: 1;
        align-items: center;
        justify-content: center;
        gap: 2px;
        margin-left: 14px;
    }

    .hthumb i {
        width: 2px;
        height: 15px;
        background: #7a8698;
    }

    .hend {
        width: 15px;
        margin-right: 14px;
    }

    .splitter {
        width: 12px;
        background: linear-gradient(90deg, #c7e1ff, #a9cbf7 6px, #7da4dc 7px, #7da4dc 8px, #b9d6fb 9px);
    }

    /* slide view */
    .editor {
        display: flex;
        flex: 1;
        flex-direction: column;
    }

    .view {
        display: flex;
        flex: 1;
    }

    .stage {
        flex: 1;
        padding: 43px 52px 34px;
        background:
            linear-gradient(165deg, #c0d8f8 46px, transparent 52px),
            linear-gradient(#a3c2ec, #97b5e0 40%, #6d91c7 75%, #557fb9 92%, #5b88c2);
    }

    .slide {
        position: relative;
        display: grid;
        grid-template-rows: 708fr 228fr;
        aspect-ratio: 1201 / 936;
        background: #000;
        box-shadow: 4px 5px 10px rgba(30, 50, 80, 0.75);

        font-family: Lato, "Open Sans", sans-serif;
        font-variant-ligatures: none;
    }

    .upper {
        display: flex;
        flex-direction: column;
        justify-content: flex-end;
        padding: 0 0 150px 105px;
        border-bottom: 7px solid #fff;
    }

    .upper p {
        font-size: 32px;
        line-height: 42px;
        color: #e8e8e8;
    }

    .upper h2 {
        margin-top: 5px;
        font-size: 74px;
        line-height: 90px;
        font-weight: 700;
        color: #22a5c3;
        white-space: nowrap;
    }

    .lower {
        background: radial-gradient(ellipse 72% 150% at 50% 0%, #705c5a, #63504c 40%, #4f3c35 72%, #371a12);
    }

    .arrow {
        position: absolute;
        left: 31%;
        top: 9%;
        width: 41%;
    }

    .arrow text {
        font-family: "DejaVu Serif", serif;
        font-weight: 700;
        font-size: 142px;
        fill: #fff;
        stroke: #fff;
        stroke-width: 11px;
        stroke-linejoin: round;
    }

    .slide-scroll {
        display: flex;
        flex-direction: column;
        width: 28px;
        padding-top: 6px;
        background: #7b98c6;
    }

    .slide-scroll > button {
        height: 34px;
    }

    .sthumb {
        display: flex;
        flex-direction: column;
        align-items: center;
        justify-content: center;
        gap: 2px;
        height: 167px;
        border: 2px solid #6c7a92;
        border-right: 0;
        background: linear-gradient(90deg, #eef0f6 45%, #bcd3e6 55%, #c3d6ea 80%, #e8edf4);
    }

    .sthumb i {
        width: 18px;
        height: 2px;
        background: #858f9f;
    }

    .track {
        flex: 1;
    }

    .steps {
        display: flex;
        flex-direction: column;
        align-items: center;
        gap: 13px;
        height: 98px;
        padding-top: 11px;
        background: #b0c9f4;
    }

    .notes {
        position: relative;
        z-index: 1;
        display: flex;
        height: 187px;
        margin: 0 0 -10px -6px;
        border: 16px solid #9bbb59;
        border-right-width: 8px;
        border-radius: 6px;
        background: #9bbb59;
    }

    textarea {
        flex: 1;
        padding: 12px;
        border: 0;
        border-radius: 0;
        resize: none;
        background: #fefefe;
        font: inherit;
        font-size: 31px;
        line-height: 38px;
        color: #222226;
    }

    .nscroll {
        display: flex;
        flex-direction: column;
        align-items: flex-end;
        justify-content: space-between;
        width: 22px;
        padding: 9px 0;
        background: linear-gradient(90deg, #a9c4e8, #7794c0 8px);
    }

    /* status bar */
    .status {
        display: flex;
        height: 45px;
        border-top: 2px solid #d9e8ff;
        background: linear-gradient(#d3e3fd, #b5cff6 45%, #c9dcfb 70%, #dce8ff);
        color: #26335f;
    }

    .cell {
        display: flex;
        align-items: center;
        padding: 0 17px;
        border-right: 2px solid #9db8e0;
    }

    .right {
        display: flex;
        align-items: center;
        margin-left: auto;
        padding: 0 12px 0 10px;
        border-left: 4px solid #6b8fcb;
        background: linear-gradient(#87a9e2, #a3c0ee 40%, #7c9fdb 60%, #8fb0e6);
    }

    .views {
        display: flex;
        height: 44px;
        padding-bottom: 4px;
        background: linear-gradient(#c6d9f5, #e1edfc);
    }

    .views button {
        width: 37px;
    }

    .views button + button {
        border-left: 1px solid #a9c0e4;
    }

    .percent {
        width: 77px;
        text-align: center;
    }

    input[type="range"] {
        appearance: none;
        width: 203px;
        height: 30px;
        margin: 0;
        background: linear-gradient(#5a7db8, #5a7db8) 0 13px / 100% 2px no-repeat, linear-gradient(#dfeaff, #dfeaff) 0 15px / 100% 2px no-repeat,
            linear-gradient(#e8f0ff, #e8f0ff) 104px 5px / 2px 20px no-repeat;
    }

    input[type="range"]::-webkit-slider-thumb {
        appearance: none;
        width: 18px;
        height: 30px;
        clip-path: polygon(0 0, 100% 0, 100% 65%, 50% 100%, 0 65%);
        background: linear-gradient(90deg, #6a7fa8 2px, #eef4fd 3px, #eef4fd 8px, #8fa5cb 8px, #8fa5cb 10px, #d9e5f7 10px, #d9e5f7 15px, #6a7fa8 16px);
    }

    .fit {
        margin-left: auto;
        padding-left: 16px;
    }

    .edge {
        height: 8px;
        border-top: 2px solid #dfe6c0;
        background: #b7c98a;
    }
</style>
